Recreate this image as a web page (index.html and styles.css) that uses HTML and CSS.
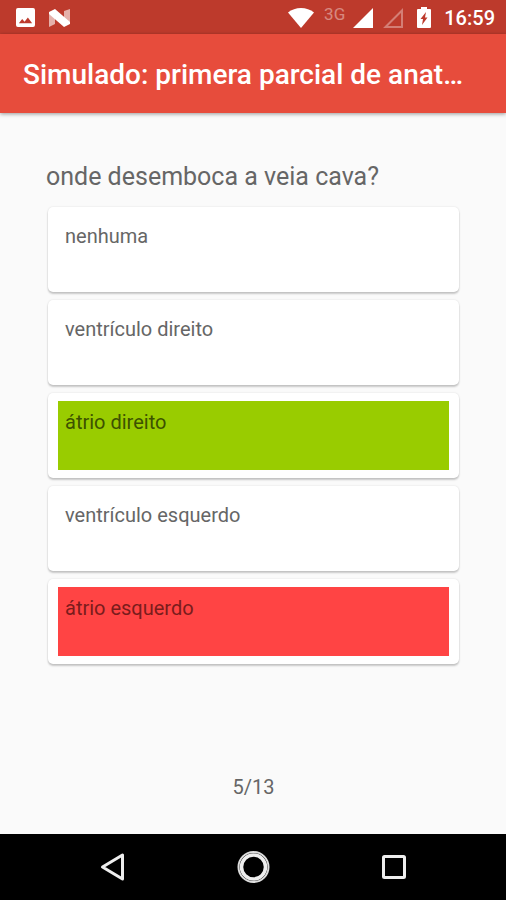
FILE: index.html
```html
<!DOCTYPE html>
<html lang="pt">
<head>
<meta charset="utf-8">
<meta name="viewport" content="width=device-width, initial-scale=1">
<title>Simulado</title>
<link rel="stylesheet" href="styles.css">
</head>
<body>
<div class="screen">
  <div class="status">
    <div class="status-group notices">
      <svg width="19" height="19" viewBox="0 0 20 20" aria-hidden="true"><path fill="#fff" fill-rule="evenodd" d="M2 0h16a2 2 0 0 1 2 2v16a2 2 0 0 1-2 2H2a2 2 0 0 1-2-2V2a2 2 0 0 1 2-2zM3 16h14l-4.500-6-3.500 4.500-2.500-3z"/></svg>
      <svg width="22" height="18" viewBox="0 0 22 18" aria-hidden="true"><path fill="#fff" opacity=".6" d="M0 3l6 4v8l-6 3zM15 2l6-2v15l-6-3z"/><path fill="#fff" d="M0 3l6-3 15 13v2l-6 3L0 5z"/></svg>
    </div>
    <div class="status-group">
      <svg width="26" height="20" viewBox="0 0 26 20" aria-hidden="true"><path fill="#fff" d="M13 20L0 4.500C7-1.500 19-1.500 26 4.500z"/></svg>
      <span class="network">3G</span>
      <svg class="signal" width="20" height="20" viewBox="0 0 20 20" aria-hidden="true"><path fill="#fff" d="M0 20L20 0v20z"/></svg>
      <svg class="signal second" width="20" height="20" viewBox="0 0 20 20" aria-hidden="true"><path fill="none" stroke="#fff" stroke-opacity=".35" stroke-width="2" d="M2.500 19L19 2.500V19z"/></svg>
      <svg class="battery" width="16" height="21" viewBox="0 0 16 21" aria-hidden="true"><path fill="#fff" d="M5 0h6v2h3a1 1 0 0 1 1 1v17a1 1 0 0 1-1 1H2a1 1 0 0 1-1-1V3a1 1 0 0 1 1-1h3z"/><path fill="#bd3a2c" d="M10 5l-5.500 7H7l-1 6 5.500-7.500H9z"/></svg>
      <span class="time">16:59</span>
    </div>
  </div>
  <header class="appbar"><h1 class="title">Simulado: primera parcial de anat…</h1></header>
  <main class="quiz">
    <h2 class="question">onde desemboca a veia cava?</h2>
    <div class="options">
      <button class="option" type="button"><span class="answer">nenhuma</span></button>
      <button class="option" type="button"><span class="answer">ventrículo direito</span></button>
      <button class="option" type="button"><span class="answer right">átrio direito</span></button>
      <button class="option" type="button"><span class="answer">ventrículo esquerdo</span></button>
      <button class="option" type="button"><span class="answer wrong">átrio esquerdo</span></button>
    </div>
    <p class="progress">5/13</p>
  </main>
  <nav class="navbar">
    <button class="key" type="button" aria-label="Voltar"><svg width="34" height="34" viewBox="0 0 34 34"><path fill="none" stroke="#eee" stroke-width="3" stroke-linejoin="round" d="M6.500 17L26.500 5v24z"/></svg></button>
    <button class="key" type="button" aria-label="Início"><svg width="34" height="34" viewBox="0 0 34 34"><circle cx="17.500" cy="17" r="15" fill="none" stroke="#ddd" stroke-width="2"/><circle cx="17.500" cy="17" r="12" fill="none" stroke="#eee" stroke-width="3.500"/></svg></button>
    <button class="key" type="button" aria-label="Recentes"><svg width="34" height="34" viewBox="0 0 34 34"><rect x="7.500" y="6.500" width="21" height="21" rx="1" fill="none" stroke="#eee" stroke-width="3"/></svg></button>
  </nav>
</div>
</body>
</html>
```
FILE: styles.css
```css
* { box-sizing: border-box; }
body { margin: 0; font-family: Roboto, "Liberation Sans", sans-serif; background: #fafafa; color: #666; }
button { font: inherit; color: inherit; border: 0; cursor: pointer; }
svg { display: block; flex: none; }

.screen { min-height: 100vh; display: flex; flex-direction: column; }

.status { height: 34px; padding: 1px 11px 0 16px; display: flex; align-items: center; justify-content: space-between; background: #bd3a2c; color: #fff; }
.status-group { display: flex; align-items: center; }
.notices { gap: 14px; }
.network { align-self: flex-start; margin: 0 8px 0 10px; font-size: 17px; line-height: 16px; opacity: .4; }
.second { margin-left: 10px; }
.battery { margin: 0 12px 0 13px; }
.time { font-size: 20px; line-height: 24px; font-weight: 500; }

.appbar { height: 79px; padding: 2px 23px 0; display: flex; align-items: center; background: #e74c3c; color: #fff; box-shadow: 0 1px 4px rgba(0, 0, 0, .4); }
.title { margin: 0; font-size: 28px; line-height: 32px; font-weight: 500; white-space: nowrap; }

.quiz { flex: 1; padding: 48px 47px 33px 48px; display: flex; flex-direction: column; }
.question { margin: 0 0 14px -2px; font-size: 25px; line-height: 32px; font-weight: 400; }
.options { display: flex; flex-direction: column; gap: 8px; }
.option { min-height: 85px; padding: 8px 10px; display: flex; text-align: left; background: #fff; border-radius: 5px; box-shadow: 0 2px 2px rgba(0, 0, 0, .2), 0 0 2px rgba(0, 0, 0, .12); }
.answer { flex: 1; align-self: stretch; padding: 9px 7px; font-size: 20px; line-height: 24px; }
.right { background: #99cc00; color: #3d5200; }
.wrong { background: #ff4444; color: #7a1c1c; }
.progress { margin: auto 0 0; text-align: center; font-size: 20px; line-height: 28px; }

.navbar { height: 66px; padding: 0 43px; display: grid; grid-template-columns: repeat(3, 1fr); background: #000; }
.key { padding: 0; display: flex; align-items: center; justify-content: center; background: transparent; }
```
